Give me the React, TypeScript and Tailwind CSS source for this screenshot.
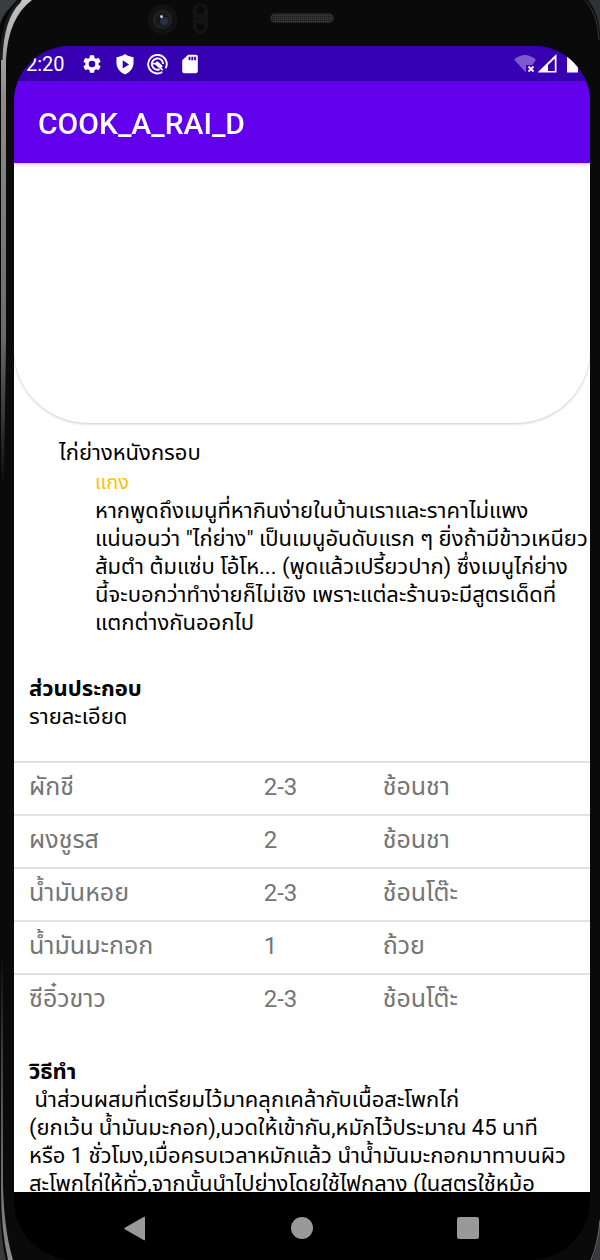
import React from "react";

type Ingredient = { name: string; amount: string; unit: string };

const ingredients: Ingredient[] = [
  { name: "ผักชี", amount: "2-3", unit: "ช้อนชา" },
  { name: "ผงชูรส", amount: "2", unit: "ช้อนชา" },
  { name: "น้ำมันหอย", amount: "2-3", unit: "ช้อนโต๊ะ" },
  { name: "น้ำมันมะกอก", amount: "1", unit: "ถ้วย" },
  { name: "ซีอิ๋วขาว", amount: "2-3", unit: "ช้อนโต๊ะ" },
];

const description = [
  "หากพูดถึงเมนูที่หากินง่ายในบ้านเราและราคาไม่แพง",
  'แน่นอนว่า "ไก่ย่าง" เป็นเมนูอันดับแรก ๆ ยิ่งถ้ามีข้าวเหนียว',
  "ส้มตำ ต้มแซ่บ โอ้โห... (พูดแล้วเปรี้ยวปาก) ซึ่งเมนูไก่ย่าง",
  "นี้จะบอกว่าทำง่ายก็ไม่เชิง เพราะแต่ละร้านจะมีสูตรเด็ดที่",
  "แตกต่างกันออกไป",
].join("\n");

const method = [
  " นำส่วนผสมที่เตรียมไว้มาคลุกเคล้ากับเนื้อสะโพกไก่",
  "(ยกเว้น น้ำมันมะกอก),นวดให้เข้ากัน,หมักไว้ประมาณ 45 นาที",
  "หรือ 1 ชั่วโมง,เมื่อครบเวลาหมักแล้ว นำน้ำมันมะกอกมาทาบนผิว",
  "สะโพกไก่ให้ทั่ว,จากนั้นนำไปย่างโดยใช้ไฟกลาง (ในสูตรใช้หม้อ",
].join("\n");

function StatusBar() {
  return (
    <div className="flex h-[35px] shrink-0 items-center bg-[#3700b3] pl-3 text-white">
      <span className="pt-px text-xl leading-none">2:20</span>
      <div className="ml-4 flex items-center gap-[11px]">
        <svg width="22" height="22" viewBox="0 0 24 24" fill="currentColor" aria-hidden="true">
          <path d="M19.14 12.94c.04-.3.06-.61.06-.94 0-.32-.02-.64-.07-.94l2.03-1.58a.49.49 0 0 0 .12-.61l-1.92-3.32a.49.49 0 0 0-.59-.22l-2.39.96c-.5-.38-1.03-.7-1.62-.94l-.36-2.54a.48.48 0 0 0-.48-.41h-3.84a.47.47 0 0 0-.47.41l-.36 2.54c-.59.24-1.13.57-1.62.94l-2.39-.96a.48.48 0 0 0-.59.22L2.74 8.87a.47.47 0 0 0 .12.61l2.03 1.58c-.05.3-.09.63-.09.94s.02.64.07.94l-2.03 1.58a.49.49 0 0 0-.12.61l1.92 3.32c.12.22.37.29.59.22l2.39-.96c.5.38 1.03.7 1.62.94l.36 2.54c.05.24.24.41.48.41h3.84c.24 0 .44-.17.47-.41l.36-2.54c.59-.24 1.13-.56 1.62-.94l2.39.96c.22.08.47 0 .59-.22l1.92-3.32a.47.47 0 0 0-.12-.61zM12 15.6A3.6 3.6 0 1 1 12 8.4a3.6 3.6 0 0 1 0 7.2z" />
        </svg>
        <svg width="22" height="22" viewBox="0 0 24 24" fill="currentColor" aria-hidden="true">
          <path fillRule="evenodd" d="M12 1C9.5 2.9 6.3 4 2.700 4.500V11c0 5.500 3.800 10 9.300 12.500C17.500 21 21.300 16.500 21.300 11V4.500C17.700 4 14.500 2.900 12 1zM9.500 8l7 4.500-7 4.500z" />
        </svg>
        <svg width="21" height="22" viewBox="0 0 22 22" fill="none" stroke="currentColor" aria-hidden="true">
          <path d="M16 19.400A9.700 9.700 0 1 1 19.600 15.500" strokeWidth="2" />
          <path d="M13.200 16.500A5.900 5.900 0 1 1 16.900 11" strokeWidth="2" />
          <path d="M8 10l3-2 5.500 5-2 2.800z" fill="currentColor" stroke="none" />
          <path d="M6 10.500l3 .5 7.500 6.500" strokeWidth="1.700" />
        </svg>
        <svg width="22" height="22" viewBox="0 0 24 24" fill="currentColor" aria-hidden="true">
          <path d="M18.500 2H10L3.500 8v12c0 1.100.9 2 2 2h13c1.100 0 2-.9 2-2V4c0-1.100-.9-2-2-2zM12.500 8h-2V4h2v4zm3 0h-2V4h2v4zm3 0h-2V4h2v4z" />
        </svg>
      </div>
      <div className="ml-auto flex items-center pr-[11px]">
        <svg width="24" height="20" viewBox="0 0 24 20" fill="none" aria-hidden="true">
          <path d="M0 5.500Q11 -3.500 22 5.500L18.500 11H12v7.500Z" fill="currentColor" opacity="0.35" />
          <path d="M14.500 12.500l5 5m0-5l-5 5" stroke="currentColor" strokeWidth="1.800" />
        </svg>
        <svg width="20" height="20" viewBox="0 0 20 20" aria-hidden="true">
          <path fillRule="evenodd" fill="currentColor" d="M-.5 18.500L18.500 0V18.500ZM10 11V17H16.800V4.500Z" />
        </svg>
        <svg className="ml-2" width="13" height="20" viewBox="0 0 13 20" aria-hidden="true">
          <path d="M1 2h2V1h6v1h3v16.500H1z" fill="currentColor" />
        </svg>
      </div>
    </div>
  );
}

/* Metal rim of the handset along the left and right edges. */
function Rim() {
  return (
    <>
      <svg className="absolute top-0 left-0" width="60" height="480" viewBox="0 0 60 480" aria-hidden="true">
        <defs>
          <linearGradient id="rimTop" gradientUnits="userSpaceOnUse" x1="0" y1="0" x2="0" y2="480">
            <stop offset="0" stopColor="#c4c4c4" />
            <stop offset="0.2" stopColor="#8c8c8c" />
            <stop offset="0.7" stopColor="#6a6a6a" />
            <stop offset="1" stopColor="#0f0d0e" />
          </linearGradient>
        </defs>
        <path d="M0 0H20Q4 10 0 24Z" fill="#3a3b3d" />
        <path d="M22 -2Q0 14 0 60V480" fill="none" stroke="#060607" strokeWidth="3" />
        <path d="M22 0H32Q8 18 6 60V340L4 480H1V60Q1 18 22 0Z" fill="url(#rimTop)" />
        <path d="M20 1Q2 18 1 60" fill="none" stroke="#1c1c1e" strokeWidth="3" />
      </svg>
      <svg className="absolute bottom-0 left-0" width="20" height="300" viewBox="0 0 20 300" aria-hidden="true">
        <defs>
          <linearGradient id="rimBottom" x1="0" y1="0" x2="0" y2="1">
            <stop offset="0" stopColor="#0f0d0e" />
            <stop offset="0.4" stopColor="#4a4a4a" />
            <stop offset="1" stopColor="#8c8c8c" />
          </linearGradient>
        </defs>
        <path d="M0 250Q1 280 6 300H0Z" fill="#3a3a3c" />
        <path d="M1 0H3V225Q4 270 13 300H8Q1 270 1 230Z" fill="url(#rimBottom)" />
      </svg>
      <svg className="absolute top-0 right-0" width="20" height="60" viewBox="0 0 20 60" aria-hidden="true">
        <path d="M8 0Q18 12 20 34V0Z" fill="#303133" />
        <path d="M5 0Q18 14 19 40" fill="none" stroke="#3c3c3c" strokeWidth="1" />
      </svg>
      <svg className="absolute right-0 bottom-0" width="12" height="60" viewBox="0 0 12 60" aria-hidden="true">
        <path d="M12 20Q10 46 4 60H12Z" fill="#3a3a3c" />
        <path d="M12 20Q10 44 3 60" fill="none" stroke="#6c6c6c" strokeWidth="1" />
      </svg>
    </>
  );
}

function PhoneTop() {
  return (
    <div className="relative h-[46px] shrink-0" aria-hidden="true">
      <svg className="absolute top-0 left-[132px]" width="190" height="40" viewBox="0 0 190 40">
        <defs>
          <pattern id="mesh" width="2" height="2" patternUnits="userSpaceOnUse">
            <rect width="2" height="2" fill="#333" />
            <rect width="1" height="1" fill="#151515" />
          </pattern>
          <radialGradient id="lens">
            <stop offset="0" stopColor="#0b0e18" />
            <stop offset="0.7" stopColor="#1b1c20" />
            <stop offset="1" stopColor="#252525" />
          </radialGradient>
        </defs>
        <circle cx="16.500" cy="19.500" r="15" fill="#121212" />
        <circle cx="16.500" cy="19.500" r="9.500" fill="url(#lens)" />
        <circle cx="18" cy="21" r="4" fill="#26304a" />
        <circle cx="15.500" cy="16.500" r="1.500" fill="#c8c8d0" />
        <rect x="47" y="3" width="15" height="31" rx="7.500" fill="#131313" />
        <circle cx="54.500" cy="10" r="5" fill="#0a0a0a" stroke="#191919" />
        <circle cx="54.500" cy="27" r="5" fill="#0a0a0a" stroke="#191919" />
        <rect x="124.500" y="13.500" width="63" height="9" rx="4.500" fill="url(#mesh)" stroke="#242424" />
      </svg>
    </div>
  );
}

function NavBar() {
  return (
    <nav className="relative flex h-[68px] shrink-0 items-center justify-between rounded-b-[60px] bg-black pt-1 pr-[111px] pl-[110px] text-[#999999]">
      <button type="button" aria-label="Back">
        <svg className="block" width="22" height="25" viewBox="0 0 22 25" fill="currentColor">
          <path d="M20 .8q1-.5 1 .5v22.400q0 1-1 .5L.8 13.300q-1-.8 0-1.600z" />
        </svg>
      </button>
      <button type="button" aria-label="Home" className="size-[22px] rounded-full bg-[#999999]" />
      <button type="button" aria-label="Recent apps" className="size-[22px] rounded-xs bg-[#999999]" />
    </nav>
  );
}

export default function App() {
  return (
    <div
      lang="th"
      className="relative flex h-screen flex-col overflow-hidden bg-[#0a0a0b] pr-[10px] pl-[14px] font-[Roboto,'Noto_Sans_Thai','Noto_Sans',sans-serif] text-[22px] leading-7 text-black"
    >
      <Rim />
      <PhoneTop />
      <div className="relative flex min-h-0 flex-1 flex-col overflow-hidden rounded-t-[56px] bg-[#3700b3]">
        <StatusBar />
        <header className="relative z-10 flex h-[82px] shrink-0 items-center bg-[#6200ee] px-6 pt-1 shadow-[0_1px_4px_rgba(0,0,0,0.25)]">
          <h1 className="text-3xl leading-8 font-medium text-white">COOK_A_RAI_D</h1>
        </header>
        <main className="min-h-0 flex-1 overflow-x-hidden overflow-y-auto bg-white [scrollbar-width:none]">
          <div className="h-[260px] rounded-b-[74px] bg-white shadow-[0_1px_3px_rgba(0,0,0,0.22)]" />
          <section className="pt-4">
            <h2 className="pl-[45px]">ไก่ย่างหนังกรอบ</h2>
            <p className="pt-px pl-[81px] text-xl leading-7 text-[#ffc107]">แกง</p>
            <p className="pt-px pl-[81px] whitespace-pre">{description}</p>
          </section>
          <section className="pt-[38px]">
            <h2 className="pl-[15px] font-bold">ส่วนประกอบ</h2>
            <p className="pl-[15px]">รายละเอียด</p>
            <table className="mt-[30px] w-full table-fixed text-[25px] text-[#757575]">
              <tbody>
                {ingredients.map((item) => (
                  <tr key={item.name} className="h-[53px] border-t-2 border-[#e2e2e2]">
                    <td className="w-[43%] pb-1 pl-[15px]">{item.name}</td>
                    <td className="w-[21%] pb-1 pl-[2px] text-2xl">{item.amount}</td>
                    <td className="pb-1">{item.unit}</td>
                  </tr>
                ))}
              </tbody>
            </table>
          </section>
          <section className="pt-[31px] pl-[15px]">
            <h2 className="font-bold">วิธีทำ</h2>
            <p className="whitespace-pre">{method}</p>
          </section>
        </main>
      </div>
      <NavBar />
    </div>
  );
}
